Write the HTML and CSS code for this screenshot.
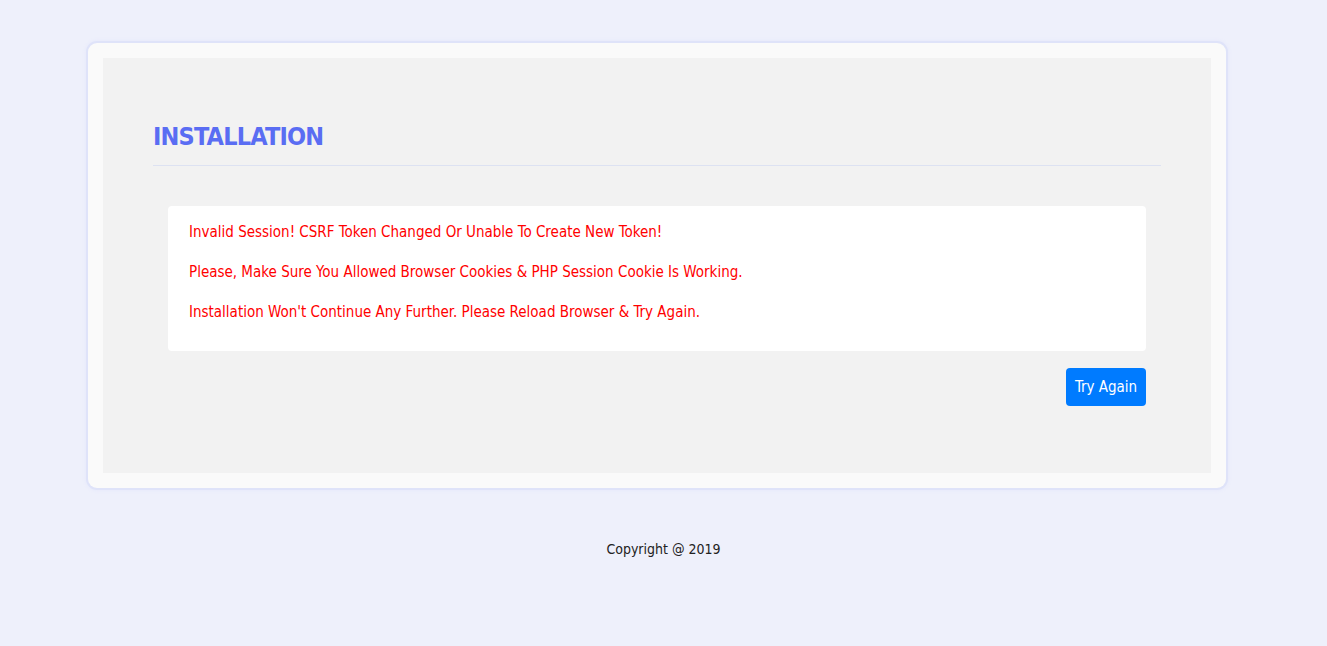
FILE: index.html
```html
<!DOCTYPE html>
<html>
<head>
<meta charset="utf-8">
<link rel="stylesheet" href="styles.css">
</head>
<body>
<div class="page">
  <div class="card">
    <div class="inner">
      <h2 class="title">INSTALLATION</h2>
      <div class="alert">
        <p>Invalid Session! CSRF Token Changed Or Unable To Create New Token!</p>
        <p>Please, Make Sure You Allowed Browser Cookies &amp; PHP Session Cookie Is Working.</p>
        <p>Installation Won't Continue Any Further. Please Reload Browser &amp; Try Again.</p>
      </div>
      <div class="actions">
        <a class="btn" href="#">Try Again</a>
      </div>
    </div>
  </div>
  <footer class="footer">Copyright @ 2019</footer>
</div>
</body>
</html>
```
FILE: styles.css
```css
html, body {
  margin: 0;
  padding: 0;
}
body {
  background: #eef0fb;
  font-family: "DejaVu Sans Condensed", "DejaVu Sans", sans-serif;
  font-stretch: condensed;
}
.page {
  padding-top: 43px;
}
.card {
  width: 1108px;
  margin: 0 0 0 88px;
  padding: 15px;
  background: #fafafa;
  border-radius: 9px;
  box-shadow: 0 0 0 2px #dfe3f9, 0 0 4px 2px #e4e7fb;
}
.inner {
  background: #f2f2f2;
  padding: 50px 50px 51px 50px;
}
.title {
  margin: 7px 0 0 0;
  font-size: 25px;
  line-height: 44px;
  font-weight: 700;
  letter-spacing: -0.8px;
  color: #5a6df3;
  padding-bottom: 6px;
  border-bottom: 1px solid #dde2f2;
}
.alert {
  margin: 40px 15px 0 15px;
  background: #ffffff;
  border-radius: 4px;
  padding: 14px 21px 11px 21px;
}
.alert p {
  margin: 0 0 16px 0;
  font-size: 15px;
  line-height: 24px;
  color: #ff0000;
  letter-spacing: 0;
}
.actions {
  display: flex;
  justify-content: flex-end;
  margin: 17px 15px 16px 15px;
}
.btn {
  display: inline-flex;
  align-items: center;
  justify-content: center;
  white-space: nowrap;
  width: 80px;
  height: 38px;
  background: #007bff;
  color: #ffffff;
  border-radius: 4px;
  font-size: 15px;
  font-weight: 400;
  text-decoration: none;
}
.footer {
  text-align: center;
  margin-top: 51px;
  font-size: 14px;
  line-height: 20px;
  color: #222222;
  letter-spacing: 0;
}
```
